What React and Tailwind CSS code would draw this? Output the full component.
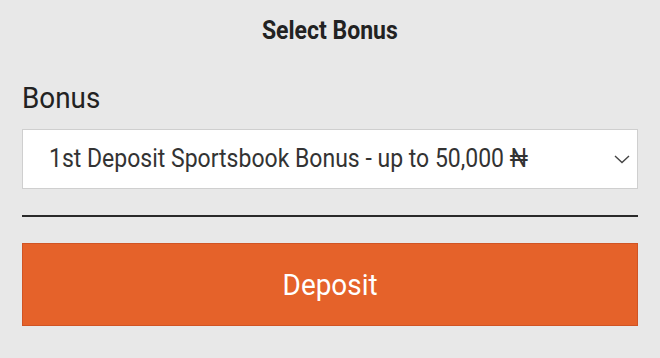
export default function App() {
  return (
    <div className="w-[660px] h-[358px] bg-[#e8e8e8] px-[22px] pt-[15px] font-['Roboto',sans-serif] text-[#222]">
      <h1 className="text-center text-[25px] font-bold leading-[32px] text-[#222]">
        <span className="inline-block scale-x-[0.92] origin-center">Select Bonus</span>
      </h1>
      <div className="mt-[34px] text-[29px] leading-[34px] text-[#222]">
        <span className="inline-block scale-x-[0.96] origin-left">Bonus</span>
      </div>
      <div className="mt-[14px] h-[60px] bg-white border border-[#cfcfcf] flex items-center justify-between pl-[26px] pr-[7px]">
        <span className="inline-block whitespace-nowrap text-[25px] text-[#333] scale-x-[0.92] origin-left">1st Deposit Sportsbook Bonus - up to 50,000 ₦</span>
        <svg width="16" height="9" viewBox="0 0 16 9" fill="none" stroke="#444" strokeWidth="1.4">
          <path d="M1 1 L8 7.5 L15 1" />
        </svg>
      </div>
      <div className="mt-[26px] h-[2px] bg-[#2a2a2a]" />
      <button className="mt-[26px] w-full h-[83px] bg-[#e5622a] border border-[#d05424] text-white text-[30px] flex items-center justify-center">
        <span className="inline-block scale-x-[0.93] origin-center">Deposit</span>
      </button>
    </div>
  );
}
